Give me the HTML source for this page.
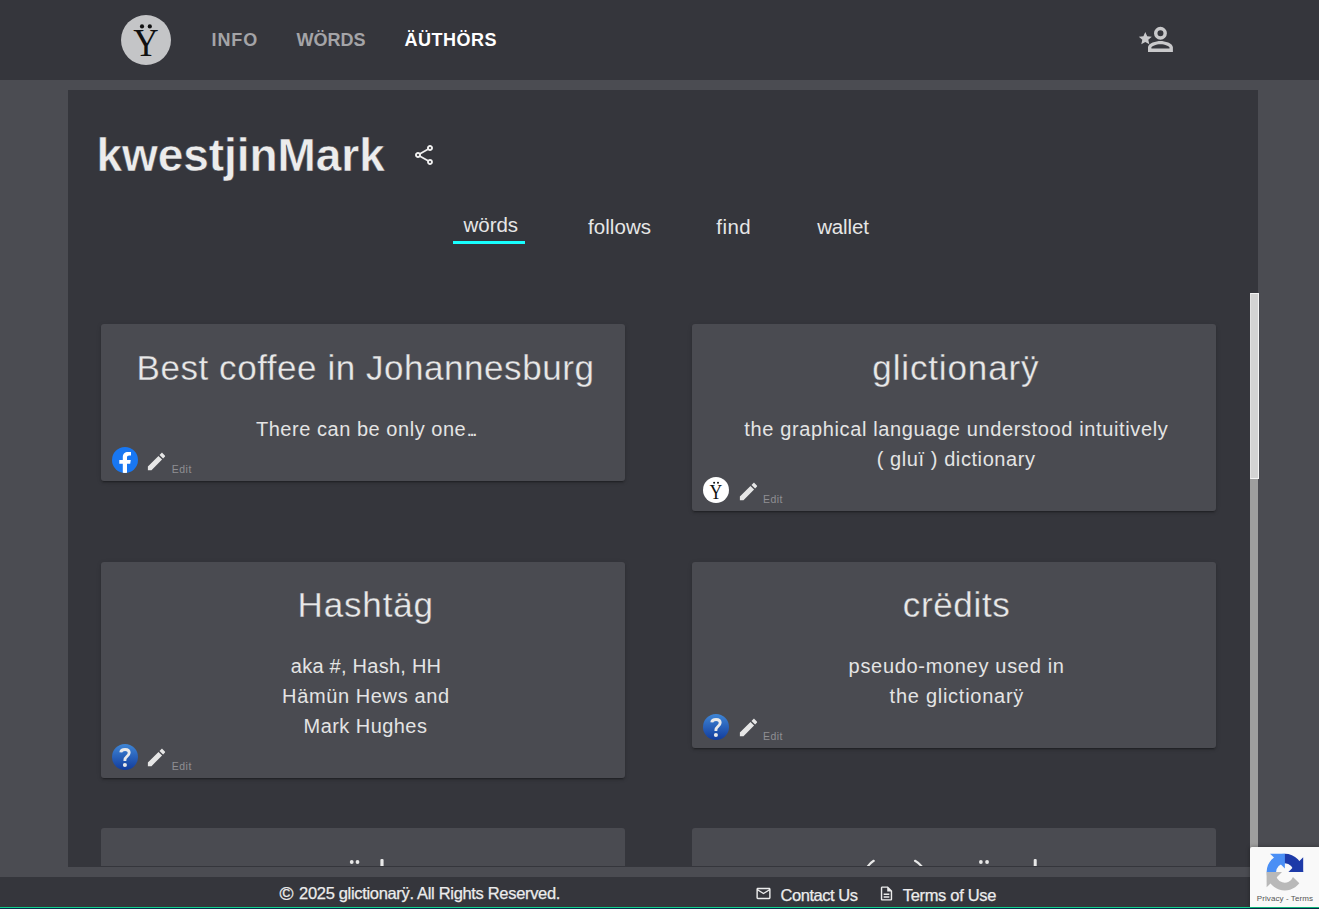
<!DOCTYPE html>
<html>
<head>
<meta charset="utf-8">
<title>glictionary</title>
<style>
*{box-sizing:border-box;margin:0;padding:0}
html,body{width:1319px;height:909px;overflow:hidden}
body{position:relative;background:#4b4c52;font-family:"Liberation Sans",sans-serif;color:#e8e8e8}
.abs{position:absolute}
.tx{position:absolute;white-space:nowrap;line-height:1}
#hdr{position:absolute;left:0;top:0;width:1319px;height:80px;background:#35363c}
#logo{position:absolute;left:121px;top:15px;width:50px;height:50px;border-radius:50%;background:#c4c5c7}
#logo span{position:absolute;left:0;width:50px;top:4px;text-align:center;font-family:"Liberation Serif",serif;font-size:38px;line-height:44px;color:#111}
#panel{position:absolute;left:68px;top:90px;width:1190px;height:777px;background:#35363c}
#tabline{position:absolute;left:453px;top:241px;width:72px;height:3px;background:#18ffff}
.card{position:absolute;width:523.6px;background:#4a4b51;border-radius:3px;box-shadow:0 3px 1px -2px rgba(0,0,0,.2),0 2px 2px 0 rgba(0,0,0,.14),0 1px 5px 0 rgba(0,0,0,.12)}
#ftr{position:absolute;left:0;top:877px;width:1319px;height:32px;background:#35363c}
</style>
</head>
<body>
<div id="hdr">
  <div id="logo"><svg width="50" height="50" viewBox="0 0 50 50" style="position:absolute;left:0;top:0"><text transform="translate(24.95,41) scale(1,1.12)" text-anchor="middle" font-family="Liberation Serif" font-size="35.2" fill="#111">Y</text><circle cx="21" cy="11.4" r="2.1" fill="#111"/><circle cx="28.8" cy="11.4" r="2.1" fill="#111"/></svg></div>
  <svg class="abs" style="left:1130px;top:20px" width="50" height="40" viewBox="1130 20 50 40">
    <g fill="#c9c9cb">
      <path fill-rule="evenodd" d="M1160.45 26.85a6.45 6.45 0 1 0 0 12.9a6.45 6.45 0 1 0 0-12.9zM1160.45 30.3a3 3 0 1 1 0 6a3 3 0 1 1 0-6z"/>
      <path fill-rule="evenodd" d="M1148 51.9V47.3C1148 43 1156.2 40.9 1160.45 40.9S1172.9 43 1172.9 47.3V51.9zM1151.4 48.4H1169.5V47.5C1169.5 46.4 1165 44.200 1160.45 44.200S1151.4 46.4 1151.4 47.5z"/>
      <path d="M1145.3 31.9L1147.2 36.3L1151.8 36.7L1148.3 39.8L1149.3 44.3L1145.3 41.9L1141.3 44.3L1142.3 39.8L1138.8 36.7L1143.4 36.3Z"/>
    </g>
  </svg>
</div>
<div id="panel"></div>
<svg class="abs" style="left:411.6px;top:143px" width="24" height="24" viewBox="0 0 24 24"><path fill="#efefef" fill-rule="evenodd" d="M18 16.08c-.76 0-1.44.3-1.96.77L8.91 12.7c.05-.23.09-.46.09-.7s-.04-.47-.09-.7l7.05-4.11c.54.5 1.25.81 2.04.81 1.66 0 3-1.34 3-3s-1.34-3-3-3-3 1.34-3 3c0 .24.04.47.09.7L8.04 9.81C7.5 9.31 6.79 9 6 9c-1.66 0-3 1.34-3 3s1.34 3 3 3c.79 0 1.5-.31 2.04-.81l7.12 4.16c-.05.21-.08.43-.08.65 0 1.61 1.31 2.92 2.92 2.92s2.92-1.31 2.92-2.92c0-1.61-1.31-2.92-2.92-2.920zM18 4c.55 0 1 .45 1 1s-.45 1-1 1-1-.45-1-1 .45-1 1-1zM6 13c-.55 0-1-.45-1-1s.45-1 1-1 1 .45 1 1-.45 1-1 1zm12 7.020c-.55 0-1-.45-1-1s.45-1 1-1 1 .45 1 1-.45 1-1 1z"/></svg>
<div id="tabline"></div>

<div class="card" style="left:101px;top:324.3px;height:156.7px"></div>
<div class="card" style="left:692px;top:324.3px;height:186.7px"></div>
<div class="card" style="left:101px;top:561.6px;height:216.2px"></div>
<div class="card" style="left:692px;top:561.6px;height:186.7px"></div>
<div class="card" style="left:101px;top:828.3px;height:37.9px;border-radius:3px 3px 0 0;box-shadow:none"></div>
<div class="card" style="left:692px;top:828.3px;height:37.9px;border-radius:3px 3px 0 0;box-shadow:none"></div>
<!-- clipped glyph tops in row 3 -->
<svg class="abs" style="left:340px;top:855px" width="60" height="11.2" viewBox="340 855 60 11.2"><g fill="#e8e8e8"><circle cx="351.7" cy="862" r="1.9"/><circle cx="357.5" cy="862" r="1.9"/><rect x="380.4" y="858.9" width="3.2" height="8" rx="1.2"/></g></svg>
<svg class="abs" style="left:860px;top:855px" width="190" height="11.2" viewBox="860 855 190 11.2"><g fill="#e8e8e8"><circle cx="980.9" cy="862" r="1.9"/><circle cx="987.1" cy="862" r="1.9"/><rect x="1033.8" y="858.9" width="3" height="8" rx="1.1"/></g><g fill="none" stroke="#e8e8e8" stroke-width="2.2" stroke-linecap="round"><path d="M873.6 860.8Q869.6 863.2 867 867.5"/><path d="M915 860.8Q919.5 863.2 922.4 867.5"/></g></svg>

<svg class="abs" style="left:112px;top:447px" width="26" height="26" viewBox="0 0 26 26"><defs><clipPath id="fbc"><circle cx="13" cy="13" r="13"/></clipPath></defs><circle cx="13" cy="13" r="13" fill="#1877f2"/><path clip-path="url(#fbc)" fill="#fff" d="M10.8 26V16.8H7.3V13h3.5v-2.8c0-3.5 2.1-5.3 5.2-5.3 1.4 0 2.4.1 3 .2v3.4h-1.8c-1.6 0-2.2.8-2.2 2.1V13h3.8l-.6 3.8H15V26z"/></svg>
<svg class="abs" style="left:145.3px;top:449.8px" width="23" height="23" viewBox="0 0 24 24"><path fill="#e6e6e6" d="M3 17.25V21h3.75L17.81 9.94l-3.75-3.75L3 17.25zM20.71 7.04c.39-.39.39-1.02 0-1.41l-2.34-2.34c-.39-.39-1.02-.39-1.41 0l-1.83 1.83 3.75 3.75 1.83-1.83z"/></svg>
<svg class="abs" style="left:703px;top:477px" width="26" height="26" viewBox="0 0 26 26"><circle cx="13" cy="13" r="13" fill="#fff"/><text transform="translate(12.9,21.6) scale(1,1.16)" text-anchor="middle" font-family="Liberation Serif" font-size="17.7" fill="#111">Y</text><circle cx="11.1" cy="5.7" r="1" fill="#111"/><circle cx="15" cy="5.7" r="1" fill="#111"/></svg>
<svg class="abs" style="left:736.5px;top:480.0px" width="23" height="23" viewBox="0 0 24 24"><path fill="#e6e6e6" d="M3 17.25V21h3.75L17.81 9.94l-3.75-3.75L3 17.25zM20.71 7.04c.39-.39.39-1.02 0-1.41l-2.34-2.34c-.39-.39-1.02-.39-1.41 0l-1.83 1.83 3.75 3.75 1.83-1.83z"/></svg>
<svg class="abs" style="left:112px;top:744px" width="26" height="26" viewBox="0 0 26 26"><defs><linearGradient id="qg1" x1="0" y1="0" x2="0" y2="1"><stop offset="0" stop-color="#3f86d6"/><stop offset="1" stop-color="#123c9c"/></linearGradient></defs><circle cx="13" cy="13" r="13" fill="url(#qg1)"/><path d="M8.8 8.4C9 6.4 10.8 5.5 13.1 5.5C15.7 5.500 17.200 6.9 17.200 8.8C17.200 10.5 16.200 11.400 14.900 12.500C13.600 13.600 12.900 14.500 12.900 15.900V17.100" fill="none" stroke="#e9e9e9" stroke-width="2.9" stroke-linecap="butt"/><circle cx="12.9" cy="21" r="2.05" fill="#e9e9e9"/></svg>
<svg class="abs" style="left:145.3px;top:746.0px" width="23" height="23" viewBox="0 0 24 24"><path fill="#e6e6e6" d="M3 17.25V21h3.75L17.81 9.94l-3.75-3.75L3 17.25zM20.71 7.04c.39-.39.39-1.02 0-1.41l-2.34-2.34c-.39-.39-1.02-.39-1.41 0l-1.83 1.83 3.75 3.75 1.83-1.83z"/></svg>
<svg class="abs" style="left:703px;top:714px" width="26" height="26" viewBox="0 0 26 26"><defs><linearGradient id="qg2" x1="0" y1="0" x2="0" y2="1"><stop offset="0" stop-color="#3f86d6"/><stop offset="1" stop-color="#123c9c"/></linearGradient></defs><circle cx="13" cy="13" r="13" fill="url(#qg2)"/><path d="M8.8 8.4C9 6.4 10.8 5.5 13.1 5.5C15.7 5.500 17.200 6.9 17.200 8.8C17.200 10.5 16.200 11.400 14.900 12.500C13.600 13.600 12.900 14.500 12.900 15.900V17.100" fill="none" stroke="#e9e9e9" stroke-width="2.9" stroke-linecap="butt"/><circle cx="12.9" cy="21" r="2.05" fill="#e9e9e9"/></svg>
<svg class="abs" style="left:736.5px;top:716.2px" width="23" height="23" viewBox="0 0 24 24"><path fill="#e6e6e6" d="M3 17.25V21h3.75L17.81 9.94l-3.75-3.75L3 17.25zM20.71 7.04c.39-.39.39-1.02 0-1.41l-2.34-2.34c-.39-.39-1.02-.39-1.41 0l-1.83 1.83 3.75 3.75 1.83-1.83z"/></svg>

<!-- scrollbar -->
<div class="abs" style="left:1250px;top:293px;width:8px;height:574px;background:#9e9e9e"></div>
<div class="abs" style="left:1250px;top:293px;width:9px;height:186px;background:#d3d3d3;border:1px solid #f4f4f4;border-left-color:#e2e2e2"></div>

<div id="ftr"></div>
<div class="abs" style="left:0;top:906.5px;width:1319px;height:1.3px;background:#0fd28c"></div>
<div class="abs" style="left:0;top:907.8px;width:1319px;height:1.2px;background:#0b2a4a"></div>
<svg class="abs" style="left:755.4px;top:885.4px" width="17" height="17" viewBox="0 0 24 24"><path fill="#ececec" d="M20 4H4c-1.100 0-1.990.9-1.990 2L2 18c0 1.100.9 2 2 2h16c1.100 0 2-.9 2-2V6c0-1.100-.9-2-2-2zm0 14H4V8l8 5 8-5v10zm-8-7L4 6h16l-8 5z"/></svg>
<svg class="abs" style="left:877.8px;top:885.4px" width="17" height="17" viewBox="0 0 24 24"><path fill="#ececec" fill-rule="evenodd" d="M8 16h8v2H8zm0-4h8v2H8zm6-10H6c-1.100 0-2 .9-2 2v16c0 1.100.89 2 1.990 2H18c1.100 0 2-.9 2-2V8l-6-6zm4 18H6V4h7v5h5v11z"/></svg>

<!-- recaptcha badge -->
<div class="abs" style="left:1250px;top:847px;width:70px;height:59.7px;background:#f9f9f9;border-radius:2px 0 0 0;box-shadow:0 0 4px rgba(0,0,0,.35)"></div>
<svg class="abs" style="left:1260px;top:847px" width="50" height="50" viewBox="-24.9 -25.1 50 50"><path fill="#b9b9b9" d="M-18.3 0A18.3 18.3 0 0 0 14.42 11.27L8.06 4.84A8.8 8.8 0 0 1 -8.8 0Z"/><path fill="#b9b9b9" d="M-18.3 0H-2.9000000000000004L-18.3 15.2Z"/><path fill="#4a8ff5" d="M-18.3 0A18.3 18.3 0 0 1 0 -18.3L0 -8.8A8.8 8.8 0 0 0 -8.8 0Z"/><path fill="#4a8ff5" d="M0 -18.3H-14.8L0 -3.5Z"/><path fill="#1d3aa8" d="M0 -18.3A18.3 18.3 0 0 1 18.3 0L8.8 0A8.8 8.8 0 0 0 0 -8.8Z"/><path fill="#1d3aa8" d="M18.3 0V-14.8L3.5 0Z"/></svg>

<div class="tx" style="left:211.50px;top:30.86px;font-size:18px;letter-spacing:0.902px;color:#a4a4a7;font-weight:bold">INFO</div>
<div class="tx" style="left:296.50px;top:30.86px;font-size:18px;letter-spacing:0.028px;color:#a4a4a7;font-weight:bold">WÖRDS</div>
<div class="tx" style="left:404.60px;top:30.86px;font-size:18px;letter-spacing:0.501px;color:#ffffff;font-weight:bold">ÄÜTHÖRS</div>
<div class="tx" style="left:96.50px;top:131.86px;font-size:46px;letter-spacing:-0.055px;color:#ececec;font-weight:bold;-webkit-text-stroke:0.45px #35363c">kwestjinMark</div>
<div class="tx" style="left:463.50px;top:215.05px;font-size:20.5px;letter-spacing:-0.033px;color:#e6e6e6">wörds</div>
<div class="tx" style="left:588.00px;top:217.15px;font-size:20.5px;letter-spacing:0.065px;color:#e6e6e6">follows</div>
<div class="tx" style="left:716.30px;top:217.15px;font-size:20.5px;letter-spacing:0.450px;color:#e6e6e6">find</div>
<div class="tx" style="left:817.20px;top:217.15px;font-size:20.5px;letter-spacing:-0.143px;color:#e6e6e6">wallet</div>
<div class="tx" style="left:136.60px;top:350.37px;font-size:35px;letter-spacing:0.549px;color:#e8e8e8;-webkit-text-stroke:0.3px #4a4b51">Best coffee in Johannesburg</div>
<div class="tx" style="left:255.90px;top:418.67px;font-size:20px;letter-spacing:0.540px;color:#e4e4e4">There can be only one<span style="letter-spacing:-2.9px;margin-left:0.3px">...</span></div>
<div class="tx" style="left:872.30px;top:350.37px;font-size:35px;letter-spacing:0.863px;color:#e8e8e8;-webkit-text-stroke:0.3px #4a4b51">glictionarÿ</div>
<div class="tx" style="left:744.30px;top:419.27px;font-size:20px;letter-spacing:0.627px;color:#e4e4e4">the graphical language understood intuitively</div>
<div class="tx" style="left:876.70px;top:449.27px;font-size:20px;letter-spacing:0.582px;color:#e4e4e4">( gluï ) dictionary</div>
<div class="tx" style="left:297.50px;top:587.37px;font-size:35px;letter-spacing:0.867px;color:#e8e8e8;-webkit-text-stroke:0.3px #4a4b51">Hashtäg</div>
<div class="tx" style="left:290.80px;top:656.17px;font-size:20px;letter-spacing:0.251px;color:#e4e4e4">aka #, Hash, HH</div>
<div class="tx" style="left:282.10px;top:686.17px;font-size:20px;letter-spacing:0.612px;color:#e4e4e4">Hämün Hews and</div>
<div class="tx" style="left:303.60px;top:716.17px;font-size:20px;letter-spacing:0.436px;color:#e4e4e4">Mark Hughes</div>
<div class="tx" style="left:902.80px;top:587.37px;font-size:35px;letter-spacing:0.652px;color:#e8e8e8;-webkit-text-stroke:0.3px #4a4b51">crëdits</div>
<div class="tx" style="left:848.60px;top:656.17px;font-size:20px;letter-spacing:0.683px;color:#e4e4e4">pseudo-money used in</div>
<div class="tx" style="left:889.60px;top:686.17px;font-size:20px;letter-spacing:0.736px;color:#e4e4e4">the glictionarÿ</div>
<div class="tx" style="left:279.60px;top:883.52px;font-size:19px;letter-spacing:0.300px;color:#ececec;-webkit-text-stroke:0.25px #ececec">©</div>
<div class="tx" style="left:299.10px;top:884.93px;font-size:16.5px;letter-spacing:-0.325px;color:#ececec;-webkit-text-stroke:0.25px #ececec">2025 glictionarÿ. All Rights Reserved.</div>
<div class="tx" style="left:780.50px;top:886.63px;font-size:16.5px;letter-spacing:-0.452px;color:#ececec;-webkit-text-stroke:0.25px #ececec">Contact Us</div>
<div class="tx" style="left:902.70px;top:886.63px;font-size:16.5px;letter-spacing:-0.310px;color:#ececec;-webkit-text-stroke:0.25px #ececec">Terms of Use</div>
<div class="tx" style="left:171.80px;top:464.01px;font-size:10.5px;letter-spacing:0.475px;color:#8f8f93">Edit</div>
<div class="tx" style="left:763.10px;top:493.91px;font-size:10.5px;letter-spacing:0.441px;color:#8f8f93">Edit</div>
<div class="tx" style="left:171.80px;top:761.01px;font-size:10.5px;letter-spacing:0.475px;color:#8f8f93">Edit</div>
<div class="tx" style="left:763.10px;top:730.91px;font-size:10.5px;letter-spacing:0.441px;color:#8f8f93">Edit</div>
<div class="tx" style="left:1256.80px;top:895.03px;font-size:8px;letter-spacing:0.085px;color:#555555">Privacy - Terms</div>
</body>
</html>
